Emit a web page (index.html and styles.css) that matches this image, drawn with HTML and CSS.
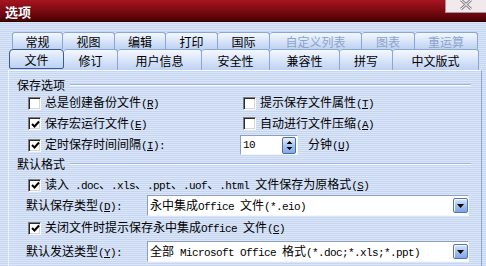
FILE: index.html
```html
<!DOCTYPE html>
<html lang="zh">
<head>
<meta charset="utf-8">
<title>选项</title>
<link rel="stylesheet" href="styles.css">
</head>
<body>
<div class="titlebar">
  <span class="title">选项</span>
  <div class="close">
    <svg width="14" height="10" viewBox="0 0 14 10"><path d="M2 0 L12 9 M12 0 L2 9" stroke="#8e8a92" stroke-width="3" fill="none"/><path d="M2 0 L12 9 M12 0 L2 9" stroke="#fbf7f9" stroke-width="1" fill="none"/></svg>
  </div>
</div>
<div class="tabs">
  <div class="tabrow row1">
    <div class="tab">常规</div>
    <div class="tab">视图</div>
    <div class="tab">编辑</div>
    <div class="tab">打印</div>
    <div class="tab">国际</div>
    <div class="tab dis">自定义列表</div>
    <div class="tab dis">图表</div>
    <div class="tab dis">重运算</div>
  </div>
  <div class="tabrow row2">
    <div class="tab sel">文件</div>
    <div class="tab">修订</div>
    <div class="tab">用户信息</div>
    <div class="tab">安全性</div>
    <div class="tab">兼容性</div>
    <div class="tab">拼写</div>
    <div class="tab">中文版式</div>
  </div>
</div>
<div class="panel">
  <div class="legend">保存选项</div>
  <div class="opts">
    <label class="cb"><span class="box"></span><span class="txt">总是创建备份文件<span class="m">(<u>R</u>)</span></span></label>
    <label class="cb right"><span class="box"></span><span class="txt">提示保存文件属性<span class="m">(<u>T</u>)</span></span></label>
    <label class="cb"><span class="box on"><svg width="9" height="9" viewBox="0 0 9 9"><path d="M1 4 L3.5 6.5 L8 1.5" stroke="#000" stroke-width="2" fill="none"/></svg></span><span class="txt">保存宏运行文件<span class="m">(<u>E</u>)</span></span></label>
    <label class="cb right"><span class="box"></span><span class="txt">自动进行文件压缩<span class="m">(<u>A</u>)</span></span></label>
    <label class="cb"><span class="box on"><svg width="9" height="9" viewBox="0 0 9 9"><path d="M1 4 L3.5 6.5 L8 1.5" stroke="#000" stroke-width="2" fill="none"/></svg></span><span class="txt">定时保存时间间隔<span class="m">(<u>I</u>):</span></span></label>
    <div class="spinrow">
      <div class="spin"><span class="val m">10</span><span class="spinbtn"><svg width="7" height="11" viewBox="0 0 7 11"><path d="M3.5 1 L6.5 4 L0.5 4 Z M0.5 7 L6.5 7 L3.5 10 Z" fill="#000"/></svg></span></div>
      <span class="unit">分钟<span class="m">(<u>U</u>)</span></span>
    </div>
  </div>
  <div class="legend second">默认格式</div>
  <label class="cb line r4"><span class="box on"><svg width="9" height="9" viewBox="0 0 9 9"><path d="M1 4 L3.5 6.5 L8 1.5" stroke="#000" stroke-width="2" fill="none"/></svg></span><span class="txt">读入<span class="m"> .doc</span>、<span class="m">.xls</span>、<span class="m">.ppt</span>、<span class="m">.uof</span>、<span class="m">.html </span>文件保存为原格式<span class="m">(<u>S</u>)</span></span></label>
  <div class="field r5">
    <span class="flabel">默认保存类型<span class="m">(<u>D</u>):</span></span>
    <div class="dd"><span class="ddtext">永中集成<span class="m">Office </span>文件<span class="m">(*.eio)</span></span><span class="ddbtn"><svg width="7" height="4" viewBox="0 0 7 4"><path d="M0 0 L7 0 L3.5 4 Z" fill="#000"/></svg></span></div>
  </div>
  <label class="cb line r6"><span class="box on"><svg width="9" height="9" viewBox="0 0 9 9"><path d="M1 4 L3.5 6.5 L8 1.5" stroke="#000" stroke-width="2" fill="none"/></svg></span><span class="txt">关闭文件时提示保存永中集成<span class="m">Office </span>文件<span class="m">(<u>C</u>)</span></span></label>
  <div class="field r7">
    <span class="flabel">默认发送类型<span class="m">(<u>Y</u>):</span></span>
    <div class="dd"><span class="ddtext">全部<span class="m"> Microsoft Office </span>格式<span class="m">(*.doc;*.xls;*.ppt)</span></span><span class="ddbtn"><svg width="7" height="4" viewBox="0 0 7 4"><path d="M0 0 L7 0 L3.5 4 Z" fill="#000"/></svg></span></div>
  </div>
</div>
</body>
</html>
```

FILE: styles.css
```css
html, body {
  margin: 0;
  padding: 0;
}
body {
  width: 486px;
  height: 266px;
  overflow: hidden;
  font-family: "Noto Sans CJK SC", "Noto Sans", sans-serif;
  font-size: 12px;
  line-height: 14px;
  color: #000;
  background: repeating-linear-gradient(to bottom, #dbe6f8 0, #dbe6f8 1px, #c6d6f1 1px, #c6d6f1 2px);
}
.m {
  font-family: "Liberation Mono", monospace;
  font-size: 11px;
  letter-spacing: -0.6px;
  white-space: pre;
}
u {
  text-decoration: underline;
  text-underline-offset: 1px;
}

/* title bar */
.titlebar {
  height: 21px;
  border-bottom: 1px solid #2c0003;
  background: linear-gradient(#a6141f, #7e0a12 50%, #4a0206);
  display: flex;
  align-items: flex-start;
}
.title {
  color: #fff;
  font-weight: bold;
  font-size: 13px;
  line-height: 13px;
  margin: 5px 0 0 5px;
  text-shadow: 0 0 1px #3a0005;
}
.close {
  margin-left: auto;
  width: 40px;
  height: 12px;
  background: #f2e9ed;
  border-left: 1px solid #a3959b;
  border-bottom: 1px solid #a3959b;
  display: flex;
  justify-content: center;
  align-items: flex-start;
}
.close svg {
  display: block;
}

/* tabs */
.tabs {
  padding-top: 10px;
}
.tabrow {
  display: grid;
}
.row1 {
  grid-template-columns: 51px 52px 51px 52px 52px 92px 53px 63px;
  margin-left: 12px;
  height: 17px;
}
.row2 {
  grid-template-columns: 55px 54px 84px 68px 70px 53px 86px;
  margin-left: 9px;
  height: 21px;
}
.tab {
  box-sizing: border-box;
  border-top: 1px solid #8ba6d4;
  border-right: 1px solid #8ba6d4;
  border-radius: 3px 3px 0 0;
  background: linear-gradient(#f4f8ff, #d6e3f8 55%, #bfd2f1);
  display: flex;
  align-items: center;
  justify-content: center;
  padding-top: 1px;
}
.tab:first-child {
  border-left: 1px solid #8ba6d4;
}
.tab.dis {
  color: #8da3cb;
}
.tab.sel {
  border: 1px solid #3a5b92;
  border-radius: 4px 4px 2px 2px;
  background: linear-gradient(#eef4fe, #cfdff7 60%, #bcd1f1);
  height: 20px;
}

/* panel */
.panel {
  margin-left: 8px;
  width: 474px;
  height: 196px;
  box-sizing: border-box;
  border-top: 1px solid #f4f8ff;
  border-left: 1px solid #edf3fc;
  border-right: 1px solid #8ca6d2;
  padding-left: 8px;
}
.legend {
  display: flex;
  align-items: center;
  height: 14px;
  margin-top: 7px;
}
.legend::after {
  content: "";
  flex: 1;
  border-top: 1px solid #a2b5d5;
  border-bottom: 1px solid #f6f9ff;
  margin-left: 5px;
  margin-right: 10px;
}
.legend.second {
  margin-top: 1px;
}
.opts {
  display: grid;
  grid-template-columns: 212px 1fr;
  grid-template-rows: 20px 21px 22px;
  margin-top: 1px;
  padding-left: 11px;
}
.cb {
  display: flex;
  align-items: center;
  white-space: nowrap;
}
.cb .box {
  margin-right: 4px;
}
.cb.right {
  padding-left: 3px;
}
.txt {
  white-space: nowrap;
}
.box {
  width: 13px;
  height: 13px;
  box-sizing: border-box;
  flex: none;
  background: #fff;
  border: 1px solid;
  border-color: #7d7d7d #fafafa #fafafa #7d7d7d;
  box-shadow: inset 1px 1px 0 #2a2a2a, inset -1px -1px 0 #d8d6d0;
  display: flex;
  align-items: center;
  justify-content: center;
}
.box svg {
  display: block;
  margin: 1px 0 0 1px;
}
.spinrow {
  display: flex;
  align-items: center;
}
.spin {
  box-sizing: border-box;
  width: 58px;
  height: 20px;
  background: #fff;
  border: 1px solid;
  border-color: #8d9fbf #f4f7fd #f4f7fd #8d9fbf;
  display: flex;
  align-items: center;
}
.spin .val {
  flex: 1;
  padding-left: 2px;
}
.spinbtn {
  width: 14px;
  height: 17px;
  box-sizing: border-box;
  border: 1px solid #446ea8;
  border-radius: 2px;
  background: linear-gradient(#e7f0ff, #a8c5f0 50%, #86aae6);
  display: flex;
  align-items: center;
  justify-content: center;
  margin-right: 1px;
}
.spinbtn svg {
  display: block;
}
.unit {
  margin-left: 10px;
}
.line {
  padding-left: 11px;
}
.r4 {
  height: 20px;
  margin-top: 4px;
}
.r6 {
  height: 24px;
}
.field {
  display: flex;
  align-items: center;
  height: 21px;
  padding-left: 9px;
}
.r7 {
  margin-top: 1px;
}
.flabel {
  width: 121px;
  flex: none;
}
.dd {
  box-sizing: border-box;
  width: 322px;
  height: 21px;
  background: #fff;
  border: 1px solid;
  border-color: #8d9fbf #f4f7fd #f4f7fd #8d9fbf;
  display: flex;
  align-items: center;
  padding-left: 2px;
}
.ddtext {
  white-space: nowrap;
}
.ddbtn {
  margin-left: auto;
  width: 15px;
  height: 15px;
  box-sizing: border-box;
  border: 1px solid #4e77b4;
  border-radius: 2px;
  background: linear-gradient(#dbe8fd, #a4c2f1 50%, #7fa5e6);
  box-shadow: inset 1px 1px 0 #f2f7ff;
  display: flex;
  align-items: center;
  justify-content: center;
}
.ddbtn svg {
  display: block;
}
```
